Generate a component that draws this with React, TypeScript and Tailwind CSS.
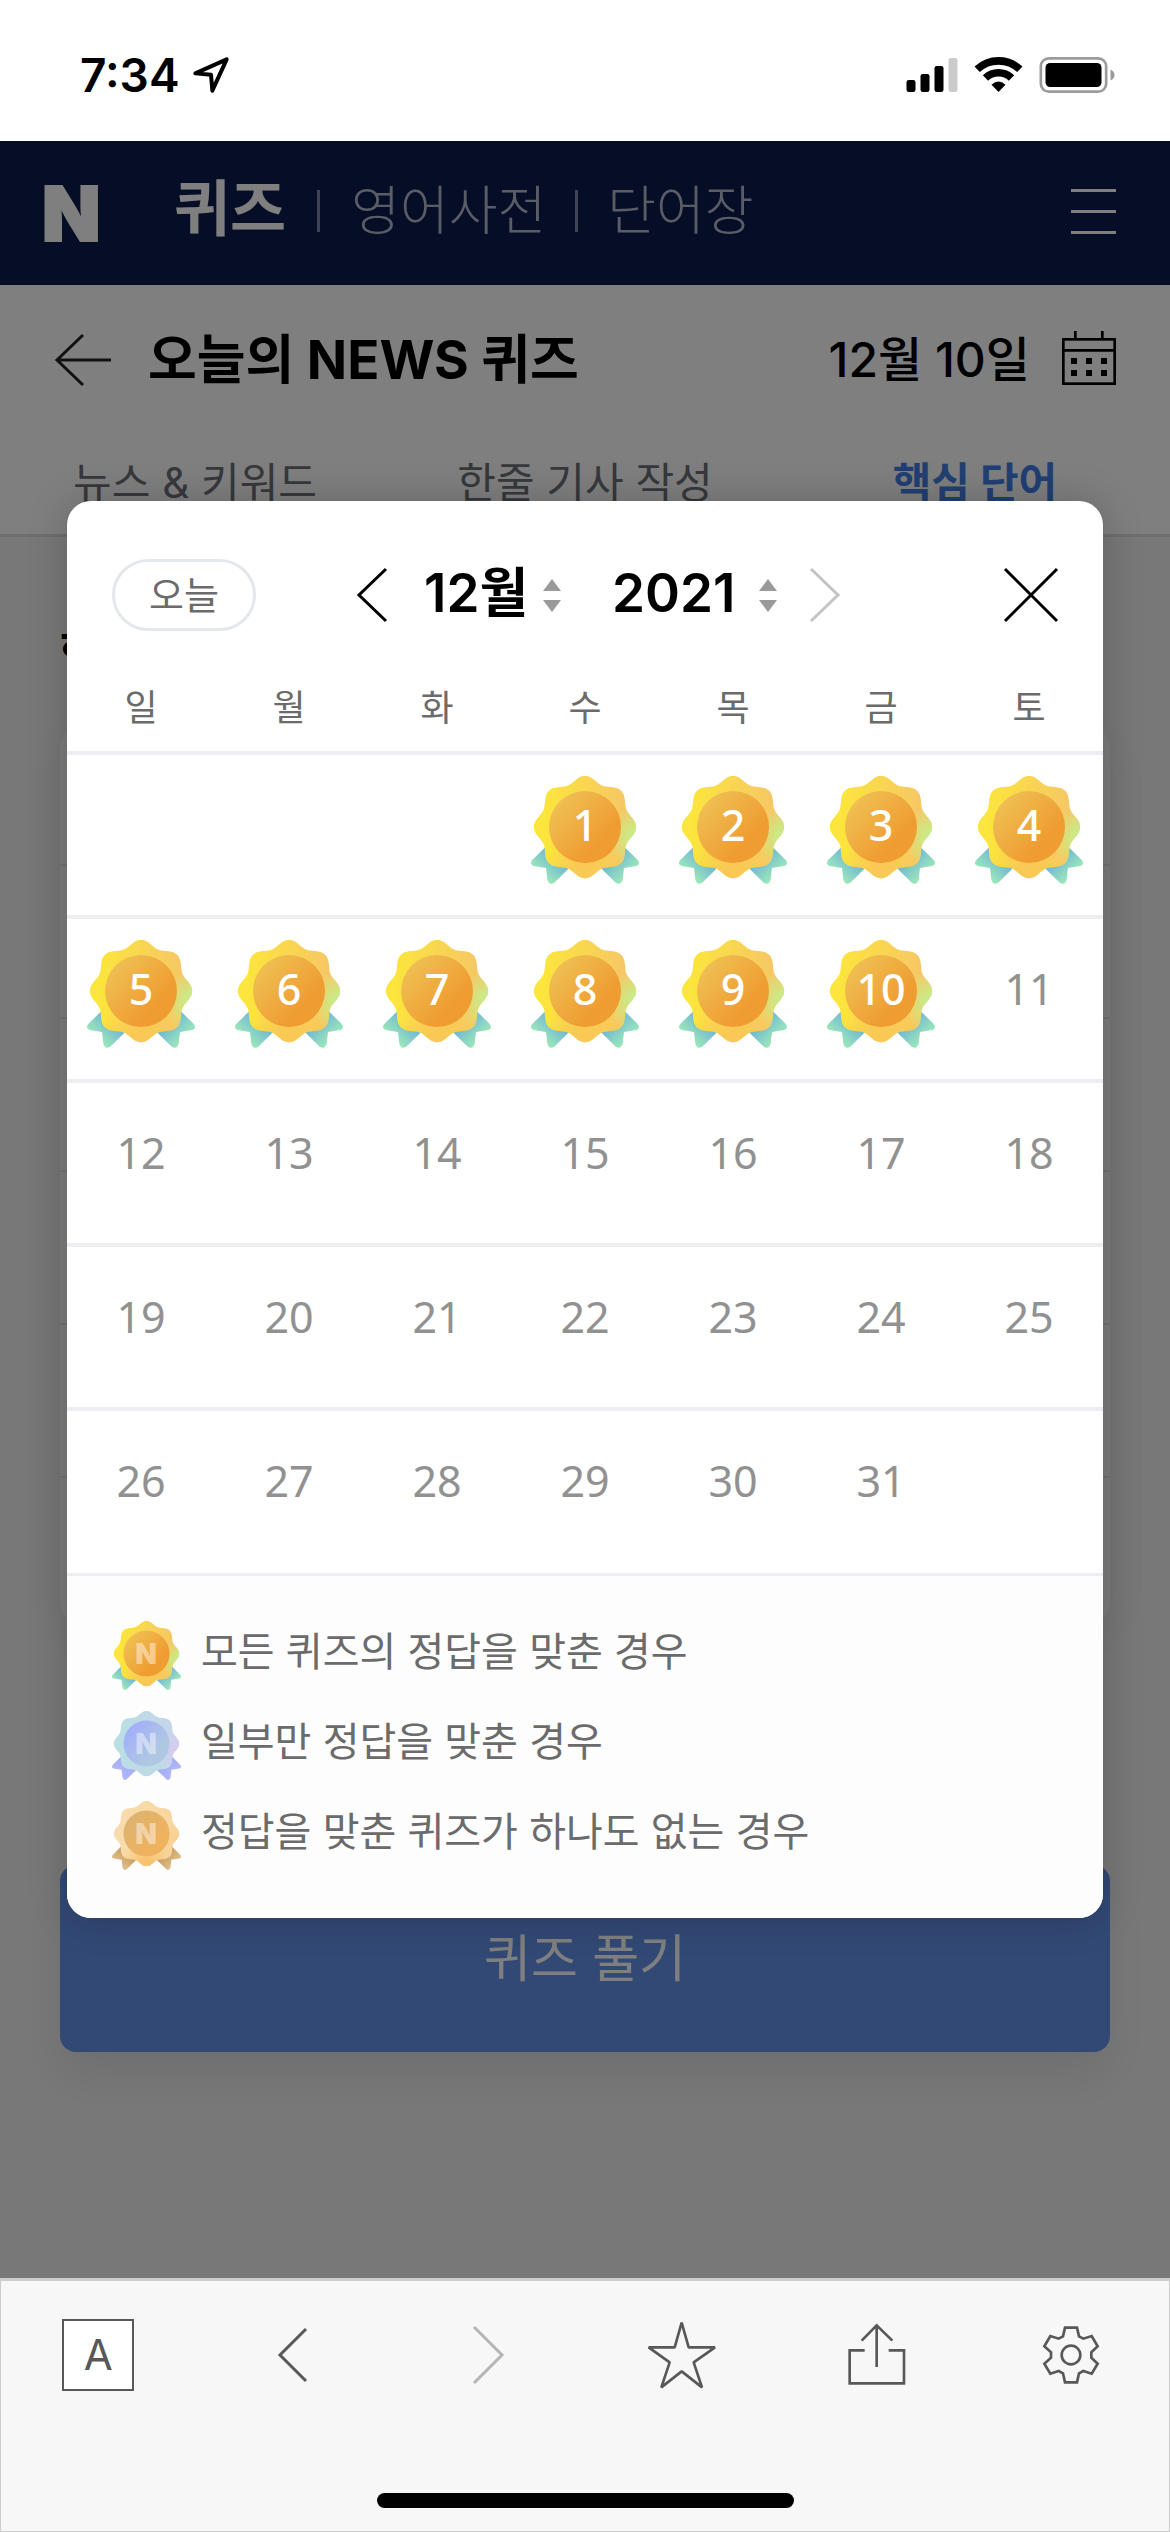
import React, { useId } from "react";

type Tone = "gold" | "blue" | "bronze";

const TONES: Record<
  Tone,
  { petalFrom: string; petalTo: string; glow: string; base: string; discFrom: string; discTo: string; ribbonIn: string; ribbonOut: string }
> = {
  gold: { petalFrom: "#fce53c", petalTo: "#f6c766", glow: "#c3f08c", base: "#f9c855", discFrom: "#efc053", discTo: "#ef9c31", ribbonIn: "#6fb4d6", ribbonOut: "#9eeab8" },
  blue: { petalFrom: "#b9dfe4", petalTo: "#c6d5ea", glow: "#dcc8f2", base: "#bcdbe6", discFrom: "#a2aefb", discTo: "#afc8e2", ribbonIn: "#9fb0f2", ribbonOut: "#b3b6fb" },
  bronze: { petalFrom: "#f8dcae", petalTo: "#f8d6a0", glow: "#f9cf90", base: "#f8c36f", discFrom: "#ddb370", discTo: "#efb25f", ribbonIn: "#c49c5e", ribbonOut: "#e2c08d" },
};

const CENTER = { x: 255, y: 234 };

const PETALS =
  Array.from({ length: 144 }, (_, i) => {
    const a = (i / 144) * Math.PI * 2;
    const r = 144 + 9.5 * Math.cos(8 * a);
    return `${i === 0 ? "M" : "L"}${(CENTER.x + r * Math.cos(a)).toFixed(1)} ${(CENTER.y + r * Math.sin(a)).toFixed(1)}`;
  }).join("") + "Z";

function Badge({ tone, className, mark }: { tone: Tone; className: string; mark?: boolean }) {
  const id = useId().replace(/[^a-zA-Z0-9]/g, "");
  const t = TONES[tone];
  return (
    <svg viewBox="93 81 324 324" className={className} aria-hidden="true">
      <defs>
        <linearGradient id={`p${id}`} x1="0" y1="0.3" x2="1" y2="0.3">
          <stop offset="0.1" stopColor={t.petalFrom} />
          <stop offset="0.9" stopColor={t.petalTo} />
        </linearGradient>
        <radialGradient id={`g${id}`} gradientUnits="userSpaceOnUse" cx="415" cy="265" r="95">
          <stop offset="0.15" stopColor={t.glow} />
          <stop offset="1" stopColor={t.glow} stopOpacity="0" />
        </radialGradient>
        <radialGradient id={`b${id}`} gradientUnits="userSpaceOnUse" cx="255" cy="385" r="130">
          <stop offset="0.2" stopColor={t.base} />
          <stop offset="1" stopColor={t.base} stopOpacity="0" />
        </radialGradient>
        <linearGradient id={`d${id}`} x1="0.1" y1="0.15" x2="0.85" y2="0.85">
          <stop offset="0" stopColor={t.discFrom} />
          <stop offset="0.8" stopColor={t.discTo} />
        </linearGradient>
        <linearGradient id={`r${id}`} gradientUnits="userSpaceOnUse" x1="180" y1="320" x2="122" y2="380">
          <stop offset="0.1" stopColor={t.ribbonIn} />
          <stop offset="1" stopColor={t.ribbonOut} />
        </linearGradient>
        <path id={`s${id}`} d="M134 296 L96 334 Q88 347 101 351 L138 357 L142 392 Q147 410 162 402 L210 355 Z" />
      </defs>
      <use href={`#s${id}`} fill={`url(#r${id})`} />
      <use href={`#s${id}`} fill={`url(#r${id})`} transform="translate(510 0) scale(-1 1)" />
      <path d={PETALS} fill={`url(#p${id})`} />
      <path d={PETALS} fill={`url(#b${id})`} />
      <path d={PETALS} fill={`url(#g${id})`} />
      <circle cx={CENTER.x} cy={CENTER.y} r="108" fill={`url(#d${id})`} />
      {mark && (
        <text x="253" y="284" textAnchor="middle" fontFamily="Inter" fontWeight="900" fontSize="132" fill="#fff" fillOpacity="0.45">
          N
        </text>
      )}
    </svg>
  );
}

function StatusBar() {
  return (
    <div className="flex h-[141px] items-center justify-between bg-white pt-2 pr-[55px] pl-20 text-black">
      <div className="flex items-center gap-3">
        <span className="text-[46px] leading-none font-semibold">7:34</span>
        <svg viewBox="390 48 114 114" className="size-[38px]" aria-label="위치">
          <path d="M400 100 L494 58 L451 152 L447 104 Z" fill="none" stroke="#000" strokeWidth="12" strokeLinejoin="round" />
        </svg>
      </div>
      <svg viewBox="260 42 626 117" className="h-[39px] w-[209px]" aria-label="신호, 와이파이, 배터리">
        <rect x="261" y="117" width="27" height="36" rx="7" />
        <rect x="303" y="99" width="27" height="54" rx="7" />
        <rect x="345" y="75" width="27" height="78" rx="7" />
        <rect x="387" y="51" width="27" height="102" rx="7" fill="#cbcbcb" />
        <g fill="none" stroke="#000" strokeWidth="23">
          <path d="M473 85 A93 93 0 0 1 601 85" />
          <path d="M498 111 A56 56 0 0 1 576 111" />
        </g>
        <path d="M516 131 Q537 112 558 131 L537 153 Z" />
        <rect x="664" y="52" width="196" height="100" rx="24" fill="none" stroke="#9b9b9b" strokeWidth="8" />
        <rect x="678" y="66" width="168" height="72" rx="14" />
        <path d="M873 86 Q885 90 885 102 Q885 114 873 118 Z" fill="#9b9b9b" />
      </svg>
    </div>
  );
}

function SiteHeader() {
  return (
    <header className="flex h-36 items-center bg-[#0a1a4e] pr-[54px] pl-[42px] text-white">
      <a href="#home" className="w-[132px] text-[76px] leading-none font-black [-webkit-text-stroke:2px_white]" aria-label="네이버">
        N
      </a>
      <nav className="flex items-center pb-1">
        <a href="#quiz" className="pb-1 text-[61px] leading-none font-bold">퀴즈</a>
        <span className="mx-[31px] h-[42px] w-[3px] bg-[#7e88a8]" />
        <a href="#dict" className="text-[53px] leading-none font-light text-[#b4bacd]">영어사전</a>
        <span className="mx-[29px] h-[42px] w-[3px] bg-[#7e88a8]" />
        <a href="#words" className="text-[53px] leading-none font-light text-[#b4bacd]">단어장</a>
      </nav>
      <button type="button" aria-label="메뉴" className="ml-auto flex flex-col gap-[18px] pb-1">
        <span className="h-[3px] w-[45px] bg-white" />
        <span className="h-[3px] w-[45px] bg-white" />
        <span className="h-[3px] w-[45px] bg-white" />
      </button>
    </header>
  );
}

function QuizPage() {
  return (
    <>
      <div className="bg-white">
        <div className="flex h-[150px] items-center pr-[54px] pl-[54px] text-black">
          <button type="button" aria-label="뒤로">
            <svg viewBox="0 0 58 54" className="h-[54px] w-[58px]" fill="none" stroke="#222" strokeWidth="3">
              <path d="M29 2 L3 27 L29 52 M3 27 H57" />
            </svg>
          </button>
          <h1 className="ml-9 text-[53px] leading-none font-bold">오늘의 NEWS 퀴즈</h1>
          <button type="button" className="ml-auto flex items-center gap-8 text-[48px] leading-none font-medium">
            12월 10일
            <svg viewBox="726 870 162 162" className="mb-1 size-[54px]" fill="none" stroke="#000" strokeWidth="8" aria-hidden="true">
              <rect x="730" y="895" width="154" height="133" />
              <path d="M730 928 H884 M766 870 V895 M847 870 V895" />
              <path d="M753 960 H771 M798 960 H816 M843 960 H861 M753 996 H771 M798 996 H816 M843 996 H861" strokeWidth="18" />
            </svg>
          </button>
        </div>
        <nav className="grid h-[102px] grid-cols-3 items-center border-b-3 border-[#dcdcdc] pb-1 text-center text-[42px] leading-none text-[#6d7076]">
          <a href="#news">뉴스 &amp; 키워드</a>
          <a href="#article">한줄 기사 작성</a>
          <a href="#core" className="font-bold text-[#447ee6]">핵심 단어</a>
        </nav>
      </div>
      <main className="px-[60px] pt-23">
        <h2 className="text-[48px] leading-none font-bold text-black">핵심 단어</h2>
        <div className="mt-12 h-[900px] divide-y-2 divide-[#e4e4e8] rounded-3xl bg-[#f8f8fa] shadow-[0_10px_60px_rgba(0,0,0,0.06)]">
          {[0, 1, 2, 3, 4, 5].map((n) => (
            <div key={n} className="h-[153px] first:h-[141px]" />
          ))}
        </div>
        <button
          type="button"
          className="mt-60 h-[187px] w-full rounded-2xl bg-[#6492ea] text-[51px] leading-none text-white shadow-[0_24px_48px_rgba(0,0,0,0.08)]"
        >
          퀴즈 풀기
        </button>
      </main>
    </>
  );
}

function Chevron({ dir, className }: { dir: "left" | "right"; className: string }) {
  return (
    <svg viewBox="0 0 32 56" className={className} fill="none" stroke="currentColor" strokeWidth="3" aria-hidden="true">
      <path d={dir === "left" ? "M30 2 L3 28 L30 54" : "M2 2 L29 28 L2 54"} />
    </svg>
  );
}

function Sorter() {
  return (
    <svg viewBox="0 0 18 33" className="h-[33px] w-[18px] shrink-0" fill="#9a9a9a" aria-hidden="true">
      <path d="M9 0 L18 12 H0 Z M0 21 H18 L9 33 Z" />
    </svg>
  );
}

const WEEKDAYS = ["일", "월", "화", "수", "목", "금", "토"];
const OFFSET = 3;
const DAYS = 31;
const SOLVED = 10;
const WEEKS = Array.from({ length: 5 }, (_, w) =>
  Array.from({ length: 7 }, (_, d) => {
    const n = w * 7 + d - OFFSET + 1;
    return n >= 1 && n <= DAYS ? n : null;
  }),
);
const MONTHS = Array.from({ length: 12 }, (_, i) => 12 - i);
const LEGEND: { tone: Tone; text: string }[] = [
  { tone: "gold", text: "모든 퀴즈의 정답을 맞춘 경우" },
  { tone: "blue", text: "일부만 정답을 맞춘 경우" },
  { tone: "bronze", text: "정답을 맞춘 퀴즈가 하나도 없는 경우" },
];

function CalendarDialog() {
  return (
    <section
      role="dialog"
      aria-label="달력"
      className="w-full overflow-hidden rounded-3xl bg-white shadow-[0_0_40px_rgba(0,0,0,0.2)]"
    >
      <div className="flex items-center pt-[58px] pr-11 pl-[45px]">
        <button
          type="button"
          className="h-[72px] w-36 rounded-full border-3 border-[#e5e8ea] text-[38px] leading-none text-[#6b6b6b]"
        >
          오늘
        </button>
        <div className="ml-[100px] flex items-center text-black">
          <button type="button" aria-label="이전 달">
            <Chevron dir="left" className="h-14 w-8" />
          </button>
          <label className="ml-9 flex items-center gap-3">
            <select aria-label="월 선택" className="w-[107px] appearance-none bg-transparent pb-1 text-[53px] leading-[60px] font-semibold">
              {MONTHS.map((m) => (
                <option key={m}>{m}월</option>
              ))}
            </select>
            <Sorter />
          </label>
          <label className="ml-[51px] flex items-center gap-3">
            <select aria-label="연도 선택" className="w-[135px] appearance-none bg-transparent pb-1 text-[53px] leading-[60px] font-semibold">
              <option>2021</option>
              <option>2020</option>
            </select>
            <Sorter />
          </label>
          <button type="button" aria-label="다음 달" className="ml-8 text-[#c4c4c4]">
            <Chevron dir="right" className="h-14 w-8" />
          </button>
        </div>
        <button type="button" aria-label="닫기" className="ml-auto">
          <svg viewBox="0 0 56 56" className="size-14" fill="none" stroke="#000" strokeWidth="3">
            <path d="M2 2 L54 54 M54 2 L2 54" />
          </svg>
        </button>
      </div>
      <table className="mt-[30px] w-full table-fixed border-collapse text-center">
        <thead>
          <tr className="h-[92px] text-[36px] leading-none text-[#6b6b6b]">
            {WEEKDAYS.map((d) => (
              <th key={d} scope="col" className="pt-1 align-middle font-normal">
                {d}
              </th>
            ))}
          </tr>
        </thead>
        <tbody>
          {WEEKS.map((week, w) => (
            <tr key={w} className="h-[164px] border-t-4 border-[#eceef2] font-['Noto_Sans',sans-serif] text-[43px] leading-none text-[#919191]">
              {week.map((n, d) => (
                <td key={d} className="p-0 align-top">
                  {n !== null &&
                    (n <= SOLVED ? (
                      <button type="button" className="relative mt-[21px] size-27 font-medium text-white">
                        <Badge tone="gold" className="absolute inset-0 size-full" />
                        <span className="relative block pb-3">{n}</span>
                      </button>
                    ) : (
                      <span className="mt-[21px] flex h-27 items-center justify-center pb-3">{n}</span>
                    ))}
                </td>
              ))}
            </tr>
          ))}
        </tbody>
      </table>
      <ul className="flex flex-col gap-[21px] border-t-3 border-[#eceef2] bg-[#fdfdfd] px-[45px] pt-[45px] pb-12 text-[40px] leading-none text-[#6b6b6b]">
        {LEGEND.map((l) => (
          <li key={l.tone} className="flex items-center gap-5">
            <Badge tone={l.tone} mark className="size-[69px]" />
            <span className="pb-2">{l.text}</span>
          </li>
        ))}
      </ul>
    </section>
  );
}

function BrowserBar() {
  const icon = "size-[72px]";
  return (
    <footer className="border border-t-3 border-[#cccccc] bg-[#f7f7f7] text-[#585858]">
      <div className="grid grid-cols-6 justify-items-center pt-[38px]">
        <button type="button" className="size-[72px] border-2 border-[#585858] bg-white text-[42px] leading-none">
          A
        </button>
        <button type="button" aria-label="뒤로 가기">
          <svg viewBox="0 0 72 72" className={icon} fill="none" stroke="currentColor" strokeWidth="3">
            <path d="M49 10 L23 36 L49 62" />
          </svg>
        </button>
        <button type="button" aria-label="앞으로 가기" className="text-[#b5b5b5]">
          <svg viewBox="0 0 72 72" className={icon} fill="none" stroke="currentColor" strokeWidth="3">
            <path d="M22 8 L50 36 L22 64" />
          </svg>
        </button>
        <button type="button" aria-label="즐겨찾기">
          <svg viewBox="79 57 216 216" className={icon} fill="none" stroke="currentColor" strokeWidth="8" strokeLinejoin="bevel">
            <path d="M186 68 L207 142 H286 L222 187 L247 262 L186 214 L125 262 L150 187 L87 142 H165 Z" />
          </svg>
        </button>
        <button type="button" aria-label="공유">
          <svg viewBox="664 57 216 216" className={icon} fill="none" stroke="currentColor" strokeWidth="8">
            <path d="M726 122 L771 76 L818 122 M771 76 V201 M735 151 H690 V250 H853 V151 H807" />
          </svg>
        </button>
        <button type="button" aria-label="설정">
          <svg viewBox="1249 57 216 216" className={icon} fill="none" stroke="currentColor" strokeWidth="8">
            <path d="M1336 83 H1372 L1378 109 L1391 116 L1416 108 L1434 139 L1415 157 V173 L1434 191 L1416 221 L1391 213 L1378 220 L1372 247 H1336 L1330 220 L1317 213 L1292 221 L1274 191 L1294 173 V157 L1274 139 L1292 108 L1317 116 L1330 109 Z" />
            <circle cx="1354" cy="165" r="28" />
          </svg>
        </button>
      </div>
      <div className="mx-auto mt-[102px] mb-[23px] h-[15px] w-[417px] rounded-full bg-black" />
    </footer>
  );
}

export default function App() {
  return (
    <div className="flex min-h-screen flex-col bg-white font-['Inter','Noto_Sans_CJK_KR',sans-serif]">
      <StatusBar />
      <div className="relative flex-1 bg-[#f1f1f1]">
        <SiteHeader />
        <QuizPage />
        <div className="absolute inset-0 flex items-center bg-black/50 px-[67px]">
          <CalendarDialog />
        </div>
      </div>
      <BrowserBar />
    </div>
  );
}
